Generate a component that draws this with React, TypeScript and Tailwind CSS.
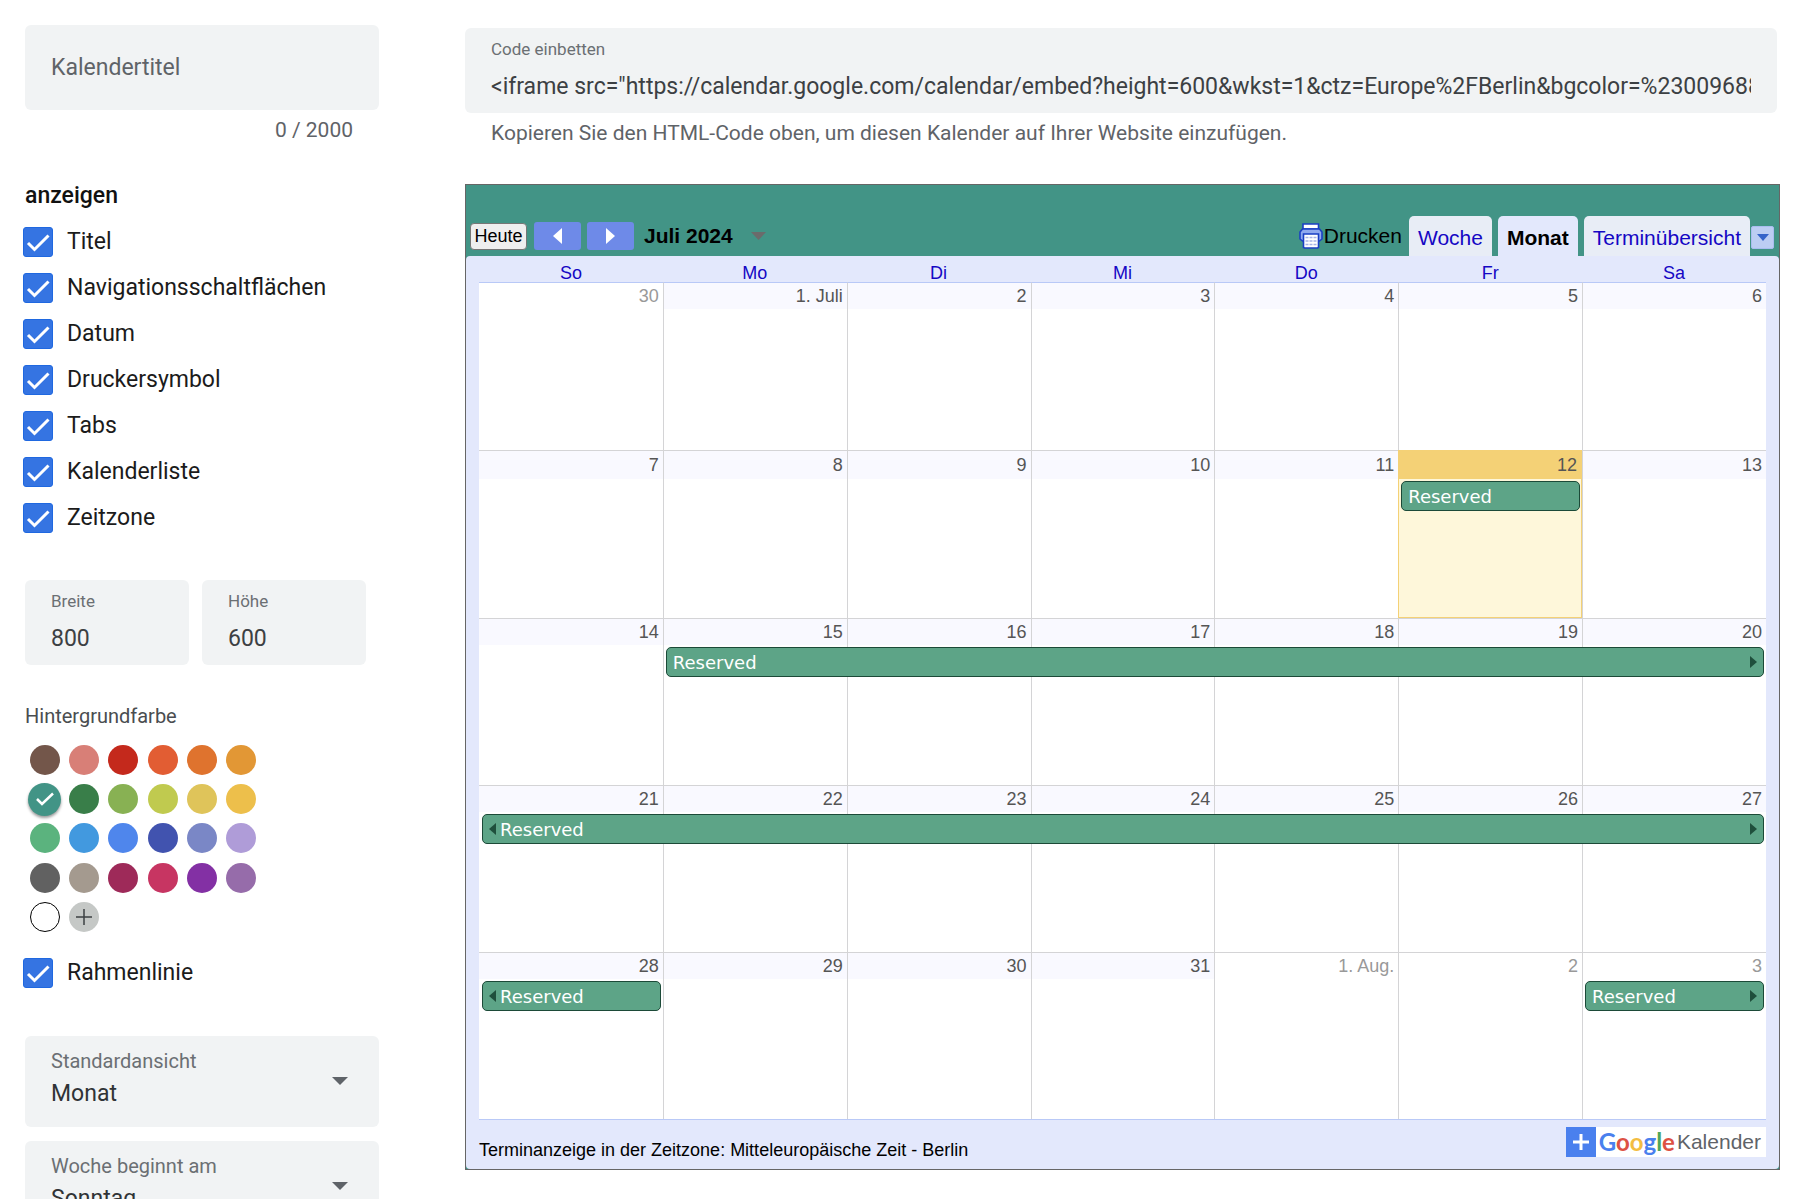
import React, { useState } from "react";

const OPTIONS = [
  "Titel",
  "Navigationsschaltflächen",
  "Datum",
  "Druckersymbol",
  "Tabs",
  "Kalenderliste",
  "Zeitzone",
];

const COLORS = [
  { name: "Kakao", className: "bg-[#73564a]" },
  { name: "Flamingo", className: "bg-[#d87f77]" },
  { name: "Tomate", className: "bg-[#c4291c]" },
  { name: "Mandarine", className: "bg-[#e25d33]" },
  { name: "Kürbis", className: "bg-[#df732e]" },
  { name: "Mango", className: "bg-[#e29735]" },
  { name: "Eukalyptus", className: "bg-[#429486]" },
  { name: "Basilikum", className: "bg-[#397e49]" },
  { name: "Pistazie", className: "bg-[#88b153]" },
  { name: "Avocado", className: "bg-[#c0ca4f]" },
  { name: "Zitrone", className: "bg-[#dfc45a]" },
  { name: "Banane", className: "bg-[#edbf4b]" },
  { name: "Salbei", className: "bg-[#5bb37e]" },
  { name: "Pfau", className: "bg-[#4299df]" },
  { name: "Kobalt", className: "bg-[#4f86ec]" },
  { name: "Blaubeere", className: "bg-[#4153af]" },
  { name: "Lavendel", className: "bg-[#7a87c6]" },
  { name: "Glyzinie", className: "bg-[#af9cd8]" },
  { name: "Graphit", className: "bg-[#616161]" },
  { name: "Birke", className: "bg-[#a49a8f]" },
  { name: "Radicchio", className: "bg-[#9e2a59]" },
  { name: "Kirschblüte", className: "bg-[#c73562]" },
  { name: "Traube", className: "bg-[#8330a4]" },
  { name: "Amethyst", className: "bg-[#966caa]" },
  { name: "Weiß", className: "border border-black bg-white" },
];

const WEEKDAYS = ["So", "Mo", "Di", "Mi", "Do", "Fr", "Sa"];

type CalendarEvent = {
  day: number;
  size: string;
  before?: boolean;
  after?: boolean;
};

type Week = {
  days: string[];
  muted?: number[];
  today?: number;
  tall?: boolean;
  events: CalendarEvent[];
};

const WEEKS: Week[] = [
  { days: ["30", "1. Juli", "2", "3", "4", "5", "6"], muted: [0], tall: true, events: [] },
  {
    days: ["7", "8", "9", "10", "11", "12", "13"],
    today: 5,
    tall: true,
    events: [{ day: 5, size: "left-0.5 w-[calc(100%-3px)]" }],
  },
  {
    days: ["14", "15", "16", "17", "18", "19", "20"],
    events: [{ day: 1, size: "left-0.5 w-[calc(600%+1px)]", after: true }],
  },
  {
    days: ["21", "22", "23", "24", "25", "26", "27"],
    events: [{ day: 0, size: "left-[3px] w-[calc(700%-5px)]", before: true, after: true }],
  },
  {
    days: ["28", "29", "30", "31", "1. Aug.", "2", "3"],
    muted: [4, 5, 6],
    events: [
      { day: 0, size: "left-[3px] w-[calc(100%-5px)]", before: true },
      { day: 6, size: "left-0.5 w-[calc(100%-4px)]", after: true },
    ],
  },
];

function Check({ className }: { className: string }) {
  return (
    <svg viewBox="0 0 30 30" className={className} fill="none" stroke="#fff" strokeWidth="3" aria-hidden="true">
      <path d="M5 16l6.5 6.5L25.5 8.5" />
    </svg>
  );
}

function CheckOption({ label }: { label: string }) {
  return (
    <label className="flex h-[46px] items-center gap-3.5 text-[23px] text-[#1b1b1b]">
      <span className="relative size-[30px] shrink-0">
        <input
          type="checkbox"
          defaultChecked
          className="peer block size-[30px] appearance-none rounded-[3px] border border-[#5f6368] checked:border-[#1f68e0] checked:bg-[#3574e2]"
        />
        <Check className="pointer-events-none absolute inset-0 hidden size-[30px] peer-checked:block" />
      </span>
      {label}
    </label>
  );
}

function TextField({ id, label, value }: { id: string; label: string; value: string }) {
  return (
    <div className="flex h-[85px] min-w-0 flex-1 flex-col rounded-md bg-[#f1f3f4] px-[26px] pt-2.5">
      <label htmlFor={id} className="text-[17px] leading-[22px] text-[#6b6f73]">
        {label}
      </label>
      <input
        id={id}
        type="text"
        defaultValue={value}
        className="mt-[11px] h-8 w-full bg-transparent text-[23px] text-[#3c4043] outline-none"
      />
    </div>
  );
}

function SelectField({ id, label, options }: { id: string; label: string; options: string[] }) {
  return (
    <div className="relative h-[91px] rounded-md bg-[#f1f3f4] px-[26px] pt-3">
      <label htmlFor={id} className="block text-[20px] leading-[26px] text-[#6b6f73]">
        {label}
      </label>
      <select
        id={id}
        className="mt-0.5 block h-9 w-full appearance-none bg-transparent text-[23px] text-[#303336] outline-none"
      >
        {options.map((o) => (
          <option key={o}>{o}</option>
        ))}
      </select>
      <svg viewBox="0 0 16 8" className="pointer-events-none absolute top-[41px] right-[31px] h-2 w-4" aria-hidden="true">
        <path d="M0 0h16l-8 8z" fill="#5f6368" />
      </svg>
    </div>
  );
}

function ColorPicker() {
  const [selected, setSelected] = useState("Eukalyptus");
  return (
    <fieldset className="mt-[39px]">
      <legend className="text-[20px] leading-6 text-[#4a4d50]">Hintergrundfarbe</legend>
      <div className="mt-3 grid h-[197px] w-[236px] grid-cols-6 grid-rows-5 place-items-center">
        {COLORS.map((c) => (
          <span key={c.name} className="relative grid place-items-center">
            <input
              type="radio"
              name="farbe"
              aria-label={c.name}
              checked={selected === c.name}
              onChange={() => setSelected(c.name)}
              className={
                c.className +
                " block appearance-none rounded-full " +
                (selected === c.name ? "size-[33px] shadow-[0_2px_3px_rgba(0,0,0,0.4)]" : "size-[30px]")
              }
            />
            {selected === c.name && (
              <svg
                viewBox="0 0 18 14"
                className="pointer-events-none absolute h-3.5 w-[18px]"
                fill="none"
                stroke="#fff"
                strokeWidth="2.5"
                aria-hidden="true"
              >
                <path d="M1 7l5 5L17 1.5" />
              </svg>
            )}
          </span>
        ))}
        <button
          type="button"
          aria-label="Eigene Farbe hinzufügen"
          className="grid size-[30px] place-items-center rounded-full bg-[#c5c8c6]"
        >
          <svg viewBox="0 0 16 16" className="size-4" stroke="#3c4043" strokeWidth="1.5" aria-hidden="true">
            <path d="M8 0v16M0 8h16" />
          </svg>
        </button>
      </div>
    </fieldset>
  );
}

function Settings() {
  return (
    <aside className="w-[356px] shrink-0 pb-8">
      <div className="ml-0.5">
        <input
          type="text"
          aria-label="Kalendertitel"
          placeholder="Kalendertitel"
          className="block h-[85px] w-full rounded-md bg-[#f1f3f4] px-[26px] text-[23px] text-[#3c4043] outline-none placeholder:text-[#5f6368]"
        />
        <p className="mt-2 pr-[26px] text-right text-[21px] leading-6 text-[#5f6368]">0 / 2000</p>
        <h2 className="mt-10 text-[23px] leading-7 font-medium text-[#111]">anzeigen</h2>
      </div>
      <div className="mt-[9px]">
        {OPTIONS.map((o) => (
          <CheckOption key={o} label={o} />
        ))}
      </div>
      <div className="mt-[39px] ml-0.5 flex gap-[13px] pr-[13px]">
        <TextField id="breite" label="Breite" value="800" />
        <TextField id="hoehe" label="Höhe" value="600" />
      </div>
      <div className="ml-0.5">
        <ColorPicker />
      </div>
      <div className="mt-[13px]">
        <CheckOption label="Rahmenlinie" />
      </div>
      <div className="mt-10 ml-0.5 flex flex-col gap-3.5">
        <SelectField id="ansicht" label="Standardansicht" options={["Monat", "Woche", "Terminübersicht"]} />
        <SelectField id="wochenbeginn" label="Woche beginnt am" options={["Sonntag", "Montag", "Samstag"]} />
      </div>
    </aside>
  );
}

function PrinterIcon() {
  return (
    <svg viewBox="0 0 24 26" className="h-[26px] w-6" aria-hidden="true">
      <path d="M4 1h15.5v5H4z" fill="#fff" stroke="#1a3fc4" strokeWidth="1.6" />
      <path
        d="M3.5 6h17l2.5 3v7l-2.5 2h-17L1 16V9z"
        fill="#8fa9ee"
        stroke="#1a3fc4"
        strokeWidth="1.6"
        strokeLinejoin="round"
      />
      <path d="M4.5 11h15v13.5l-1 .5h-13l-1-.5z" fill="#fff" stroke="#1a3fc4" strokeWidth="1.6" />
      <path
        d="M6.5 14.5h3M10.5 14.5h3M14.5 14.5h3M6.5 18h3M10.5 18h3M14.5 18h3M6.5 21.5h3M10.5 21.5h3M14.5 21.5h3"
        stroke="#a6b4e6"
        strokeWidth="1.6"
      />
    </svg>
  );
}

function NavButton({ label, path }: { label: string; path: string }) {
  return (
    <button type="button" aria-label={label} className="grid h-7 w-[47px] place-items-center rounded-[3px] bg-[#6e8ae8]">
      <svg viewBox="0 0 9 16" className="h-4 w-[9px]" fill="#fff" aria-hidden="true">
        <path d={path} />
      </svg>
    </button>
  );
}

function CalendarHeader() {
  return (
    <header className="flex h-[71px] items-end justify-between pr-[5px] pl-1 text-[21px] text-black">
      <div className="mb-1.5 flex items-center">
        <button
          type="button"
          className="h-[27px] w-[57px] rounded-[4px] border border-[#767676] bg-[#efefef] text-center text-[18px] leading-[25px]"
        >
          Heute
        </button>
        <div className="mr-2.5 ml-[7px] flex gap-1.5">
          <NavButton label="Zurück" path="M9 0v16L0 8z" />
          <NavButton label="Vor" path="M0 0v16l9-8z" />
        </div>
        <button type="button" className="flex items-center gap-[18px] leading-7 font-bold">
          Juli 2024
          <svg viewBox="0 0 15 8" className="h-2 w-[15px]" fill="#6b6b6b" aria-hidden="true">
            <path d="M0 0h15l-7.5 8z" />
          </svg>
        </button>
      </div>
      <div className="flex items-end">
        <button type="button" className="mr-[7px] mb-1.5 flex items-center gap-px leading-7">
          <PrinterIcon />
          Drucken
        </button>
        <div role="tablist" className="flex gap-1.5 leading-[26px] text-[#1507c4]">
          <button type="button" role="tab" className="h-10 rounded-t-[5px] bg-[#e8edf6] px-[9px] pt-[3px]">
            Woche
          </button>
          <button
            type="button"
            role="tab"
            aria-selected="true"
            className="h-10 rounded-t-[5px] bg-[#e3e8fc] px-[9px] pt-[3px] font-bold text-black"
          >
            Monat
          </button>
          <button type="button" role="tab" className="h-10 rounded-t-[5px] bg-[#e8edf6] px-[9px] pt-[3px]">
            Terminübersicht
          </button>
        </div>
        <button
          type="button"
          aria-label="Kalenderliste"
          className="mb-[7px] ml-px grid size-[23px] place-items-center rounded-[2px] border border-[#a9bdf0] bg-[#bccdf3]"
        >
          <svg viewBox="0 0 12 7" className="h-[7px] w-3" fill="#3563c9" aria-hidden="true">
            <path d="M0 0h12l-6 7z" />
          </svg>
        </button>
      </div>
    </header>
  );
}

function EventBar({ event, offset }: { event: CalendarEvent; offset: string }) {
  return (
    <a
      href="#reserved"
      className={
        event.size +
        " " +
        offset +
        " absolute z-10 flex h-[30px] items-center rounded-[5px] border border-[#1c4a38] bg-[#5da487] px-1.5 font-['DejaVu_Sans',Verdana,sans-serif] text-[18px] text-white"
      }
    >
      {event.before && (
        <svg viewBox="0 0 7 12" className="mr-1 h-3 w-[7px]" fill="#1f4f3c" aria-hidden="true">
          <path d="M7 0v12L0 6z" />
        </svg>
      )}
      Reserved
      {event.after && (
        <svg viewBox="0 0 7 12" className="ml-auto h-3 w-[7px]" fill="#1f4f3c" aria-hidden="true">
          <path d="M0 0v12l7-6z" />
        </svg>
      )}
    </a>
  );
}

function MonthTable() {
  return (
    <table className="w-full table-fixed border-separate border-spacing-0 border-b border-[#b9c9f7] text-[18px]">
      <thead>
        <tr>
          {WEEKDAYS.map((d) => (
            <th key={d} scope="col" className="p-0 pt-2 leading-[18px] font-normal text-[#1507c4]">
              {d}
            </th>
          ))}
        </tr>
      </thead>
      <tbody>
        {WEEKS.map((week, w) => (
          <tr key={w} className={week.tall ? "h-[168px]" : "h-[167px]"}>
            {week.days.map((day, d) => {
              const today = week.today === d;
              const muted = week.muted?.includes(d);
              const strip = today
                ? "bg-[#f4d176] text-[#555]"
                : muted
                  ? "text-[#999]"
                  : "bg-[#f9f9ff] text-[#555]";
              return (
                <td
                  key={d}
                  className={
                    "relative p-0 align-top " +
                    (today
                      ? "border border-[#f4d176] bg-[#fef7da]"
                      : "border-t bg-white " +
                        (w === 0 ? "border-t-[#b9c9f7] " : "border-t-[#d4d4d6] ") +
                        (d > 0 ? "border-l border-l-[#d4d4d6]" : ""))
                  }
                >
                  <div
                    className={
                      strip + " pr-1 text-right " + (week.today !== undefined ? "leading-7" : "leading-[26px]")
                    }
                  >
                    {day}
                  </div>
                  {week.events
                    .filter((e) => e.day === d)
                    .map((e) => (
                      <EventBar key={e.day} event={e} offset={week.today !== undefined ? "top-[30px]" : "top-7"} />
                    ))}
                </td>
              );
            })}
          </tr>
        ))}
      </tbody>
    </table>
  );
}

function CalendarLink() {
  return (
    <a href="#google-kalender" className="flex h-[30px] items-center bg-white pr-[5px]">
      <span className="grid size-[30px] place-items-center bg-[#4a80ee]">
        <svg viewBox="0 0 16 16" className="size-4" stroke="#fff" strokeWidth="3" aria-hidden="true">
          <path d="M8 0v16M0 8h16" />
        </svg>
      </span>
      <span className="ml-[3px] font-[Lato,sans-serif] text-[24px] leading-[30px] font-bold">
        <span className="text-[#4a80ee]">G</span>
        <span className="text-[#dd5144]">o</span>
        <span className="text-[#f3bd42]">o</span>
        <span className="text-[#4a80ee]">g</span>
        <span className="text-[#4fa65a]">l</span>
        <span className="text-[#dd5144]">e</span>
      </span>
      <span className="ml-0.5 text-[21px] leading-[30px] text-[#5f6368]">Kalender</span>
    </a>
  );
}

function CalendarPreview() {
  return (
    <section
      aria-label="Kalendervorschau"
      className="mt-[39px] border border-[#666] bg-[#429486] font-['Liberation_Sans',Arial,sans-serif]"
    >
      <CalendarHeader />
      <div className="rounded-[4px] bg-[#e3e8fc] px-[13px] pb-[7px]">
        <MonthTable />
        <footer className="flex items-start justify-between pt-[7px]">
          <p className="pt-[11px] text-[18px] leading-6 text-black">
            Terminanzeige in der Zeitzone: Mitteleuropäische Zeit - Berlin
          </p>
          <CalendarLink />
        </footer>
      </div>
    </section>
  );
}

export default function App() {
  return (
    <div className="flex h-screen gap-[86px] overflow-y-auto bg-white pt-[25px] pr-5 pl-[23px] font-[Roboto,sans-serif] [scrollbar-width:none]">
      <Settings />
      <main className="min-w-0 flex-1 pt-[3px]">
        <div className="mr-[3px] flex">
          <TextField
            id="code"
            label="Code einbetten"
            value={
              '<iframe src="https://calendar.google.com/calendar/embed?height=600&wkst=1&ctz=Europe%2FBerlin&bgcolor=%23009688" style="border:solid 1px #777" width="800" height="600" frameborder="0" scrolling="no"></iframe>'
            }
          />
        </div>
        <p className="mt-2 pl-[26px] text-[21px] leading-6 text-[#5f6368]">
          Kopieren Sie den HTML-Code oben, um diesen Kalender auf Ihrer Website einzufügen.
        </p>
        <CalendarPreview />
      </main>
    </div>
  );
}
